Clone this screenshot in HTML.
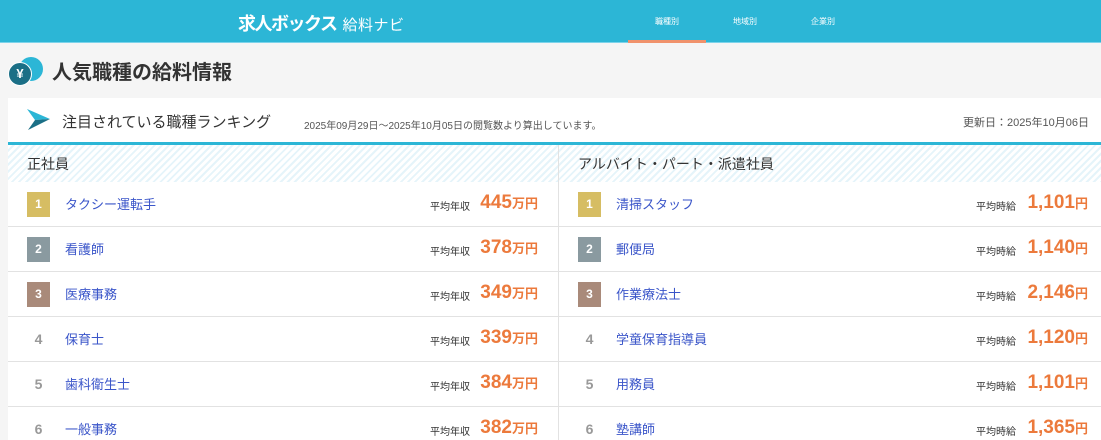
<!DOCTYPE html><html><head><meta charset="utf-8"><style>
*{margin:0;padding:0;box-sizing:border-box}
html,body{width:1101px;height:440px;overflow:hidden}
body{background:#f5f5f5;font-family:"Liberation Sans","Noto Sans CJK JP",sans-serif;position:relative}
.hd{position:absolute;left:0;top:0;width:1101px;height:43px;background:#2cb6d6;border-bottom:1px solid #7dd3ea}
.logo{position:absolute;left:238px;top:10px;color:#fff;font-size:18px;font-weight:bold;letter-spacing:-1.5px}
.logo span{font-weight:normal;font-size:15px;margin-left:6px;letter-spacing:0.5px}
.nav{position:absolute;top:16px;color:#fff;font-size:8px}
.act{position:absolute;left:628px;top:40px;width:78px;height:3px;background:#f0926c;z-index:2}
.ttl{position:absolute;left:52px;top:56px;font-size:20px;font-weight:bold;color:#333}
.card{position:absolute;left:8px;top:98px;width:1093px;height:342px;background:#fff;overflow:hidden}
.th{position:absolute;left:0;top:0;width:100%;height:47px;border-bottom:3px solid #2cb6d6}
.sub{position:absolute;left:0;top:47px;width:100%;height:37px;background:repeating-linear-gradient(135deg,#fff 0 3px,#e5f4fa 3px 5px)}
.col{position:absolute;top:47px;width:550px}
.ch{height:37px;font-size:14px;color:#333;padding:9px 0 0 19px}
.row{height:45px;border-bottom:1px solid #e2e2e2;position:relative;background:#fff}
.b{position:absolute;left:19px;top:10px;width:23px;height:25px;color:#fff;font-size:12px;font-weight:bold;text-align:center;line-height:25px}
.b.n{color:#999;font-size:14px}
.nm{position:absolute;left:57px;top:12px;font-size:13px;color:#3a55c9}
.lb{position:absolute;right:88px;top:16px;font-size:10px;color:#333}
.pr{position:absolute;right:20px;top:10px;font-size:19px;font-weight:bold;color:#ec7a3c}
.pr small{font-size:13px}
.r .lb{right:85px}.r .pr{right:13px}
</style></head><body>
<div class="hd"><div class="logo">求人ボックス<span>給料ナビ</span></div>
<div class="nav" style="left:655px">職種別</div><div class="nav" style="left:733px">地域別</div><div class="nav" style="left:811px">企業別</div></div>
<div class="act"></div>
<div style="position:absolute;left:19px;top:57px;width:24px;height:24px;border-radius:50%;background:#2cb6d6"></div>
<div style="position:absolute;left:8px;top:62px;width:24px;height:24px;border-radius:50%;background:#1b6f86;border:1px solid #fff;color:#fff;font-size:13px;font-weight:bold;text-align:center;line-height:22px">¥</div>
<div class="ttl">人気職種の給料情報</div>
<div class="card">
<div class="th">
<svg style="position:absolute;left:19px;top:11px" width="24" height="22"><polygon points="0,0 23,10 8,11" fill="#2cb6d6"/><polygon points="8,11 23,10 1,21" fill="#1b6f86"/></svg>
<div style="position:absolute;left:54px;top:13px;font-size:15px;color:#333">注目されている職種ランキング</div>
<div style="position:absolute;left:296px;top:19px;font-size:10px;color:#555">2025年09月29日〜2025年10月05日の閲覧数より算出しています。</div>
<div style="position:absolute;right:12px;top:16px;font-size:11px;color:#555">更新日：2025年10月06日</div>
</div>
<div class="sub"></div>
<div class="col" style="left:0">
<div class="ch">正社員</div>
<div class="row"><div class="b" style="background:#d6bd63">1</div><div class="nm">タクシー運転手</div><div class="lb">平均年収</div><div class="pr">445<small>万円</small></div></div>
<div class="row"><div class="b" style="background:#8a9aa0">2</div><div class="nm">看護師</div><div class="lb">平均年収</div><div class="pr">378<small>万円</small></div></div>
<div class="row"><div class="b" style="background:#a98a7a">3</div><div class="nm">医療事務</div><div class="lb">平均年収</div><div class="pr">349<small>万円</small></div></div>
<div class="row"><div class="b n">4</div><div class="nm">保育士</div><div class="lb">平均年収</div><div class="pr">339<small>万円</small></div></div>
<div class="row"><div class="b n">5</div><div class="nm">歯科衛生士</div><div class="lb">平均年収</div><div class="pr">384<small>万円</small></div></div>
<div class="row"><div class="b n">6</div><div class="nm">一般事務</div><div class="lb">平均年収</div><div class="pr">382<small>万円</small></div></div>
</div>
<div class="col r" style="left:550px;width:543px;border-left:1px solid #e2e2e2">
<div class="ch">アルバイト・パート・派遣社員</div>
<div class="row"><div class="b" style="background:#d6bd63">1</div><div class="nm">清掃スタッフ</div><div class="lb">平均時給</div><div class="pr">1,101<small>円</small></div></div>
<div class="row"><div class="b" style="background:#8a9aa0">2</div><div class="nm">郵便局</div><div class="lb">平均時給</div><div class="pr">1,140<small>円</small></div></div>
<div class="row"><div class="b" style="background:#a98a7a">3</div><div class="nm">作業療法士</div><div class="lb">平均時給</div><div class="pr">2,146<small>円</small></div></div>
<div class="row"><div class="b n">4</div><div class="nm">学童保育指導員</div><div class="lb">平均時給</div><div class="pr">1,120<small>円</small></div></div>
<div class="row"><div class="b n">5</div><div class="nm">用務員</div><div class="lb">平均時給</div><div class="pr">1,101<small>円</small></div></div>
<div class="row"><div class="b n">6</div><div class="nm">塾講師</div><div class="lb">平均時給</div><div class="pr">1,365<small>円</small></div></div>
</div>
</div>
</body></html>
